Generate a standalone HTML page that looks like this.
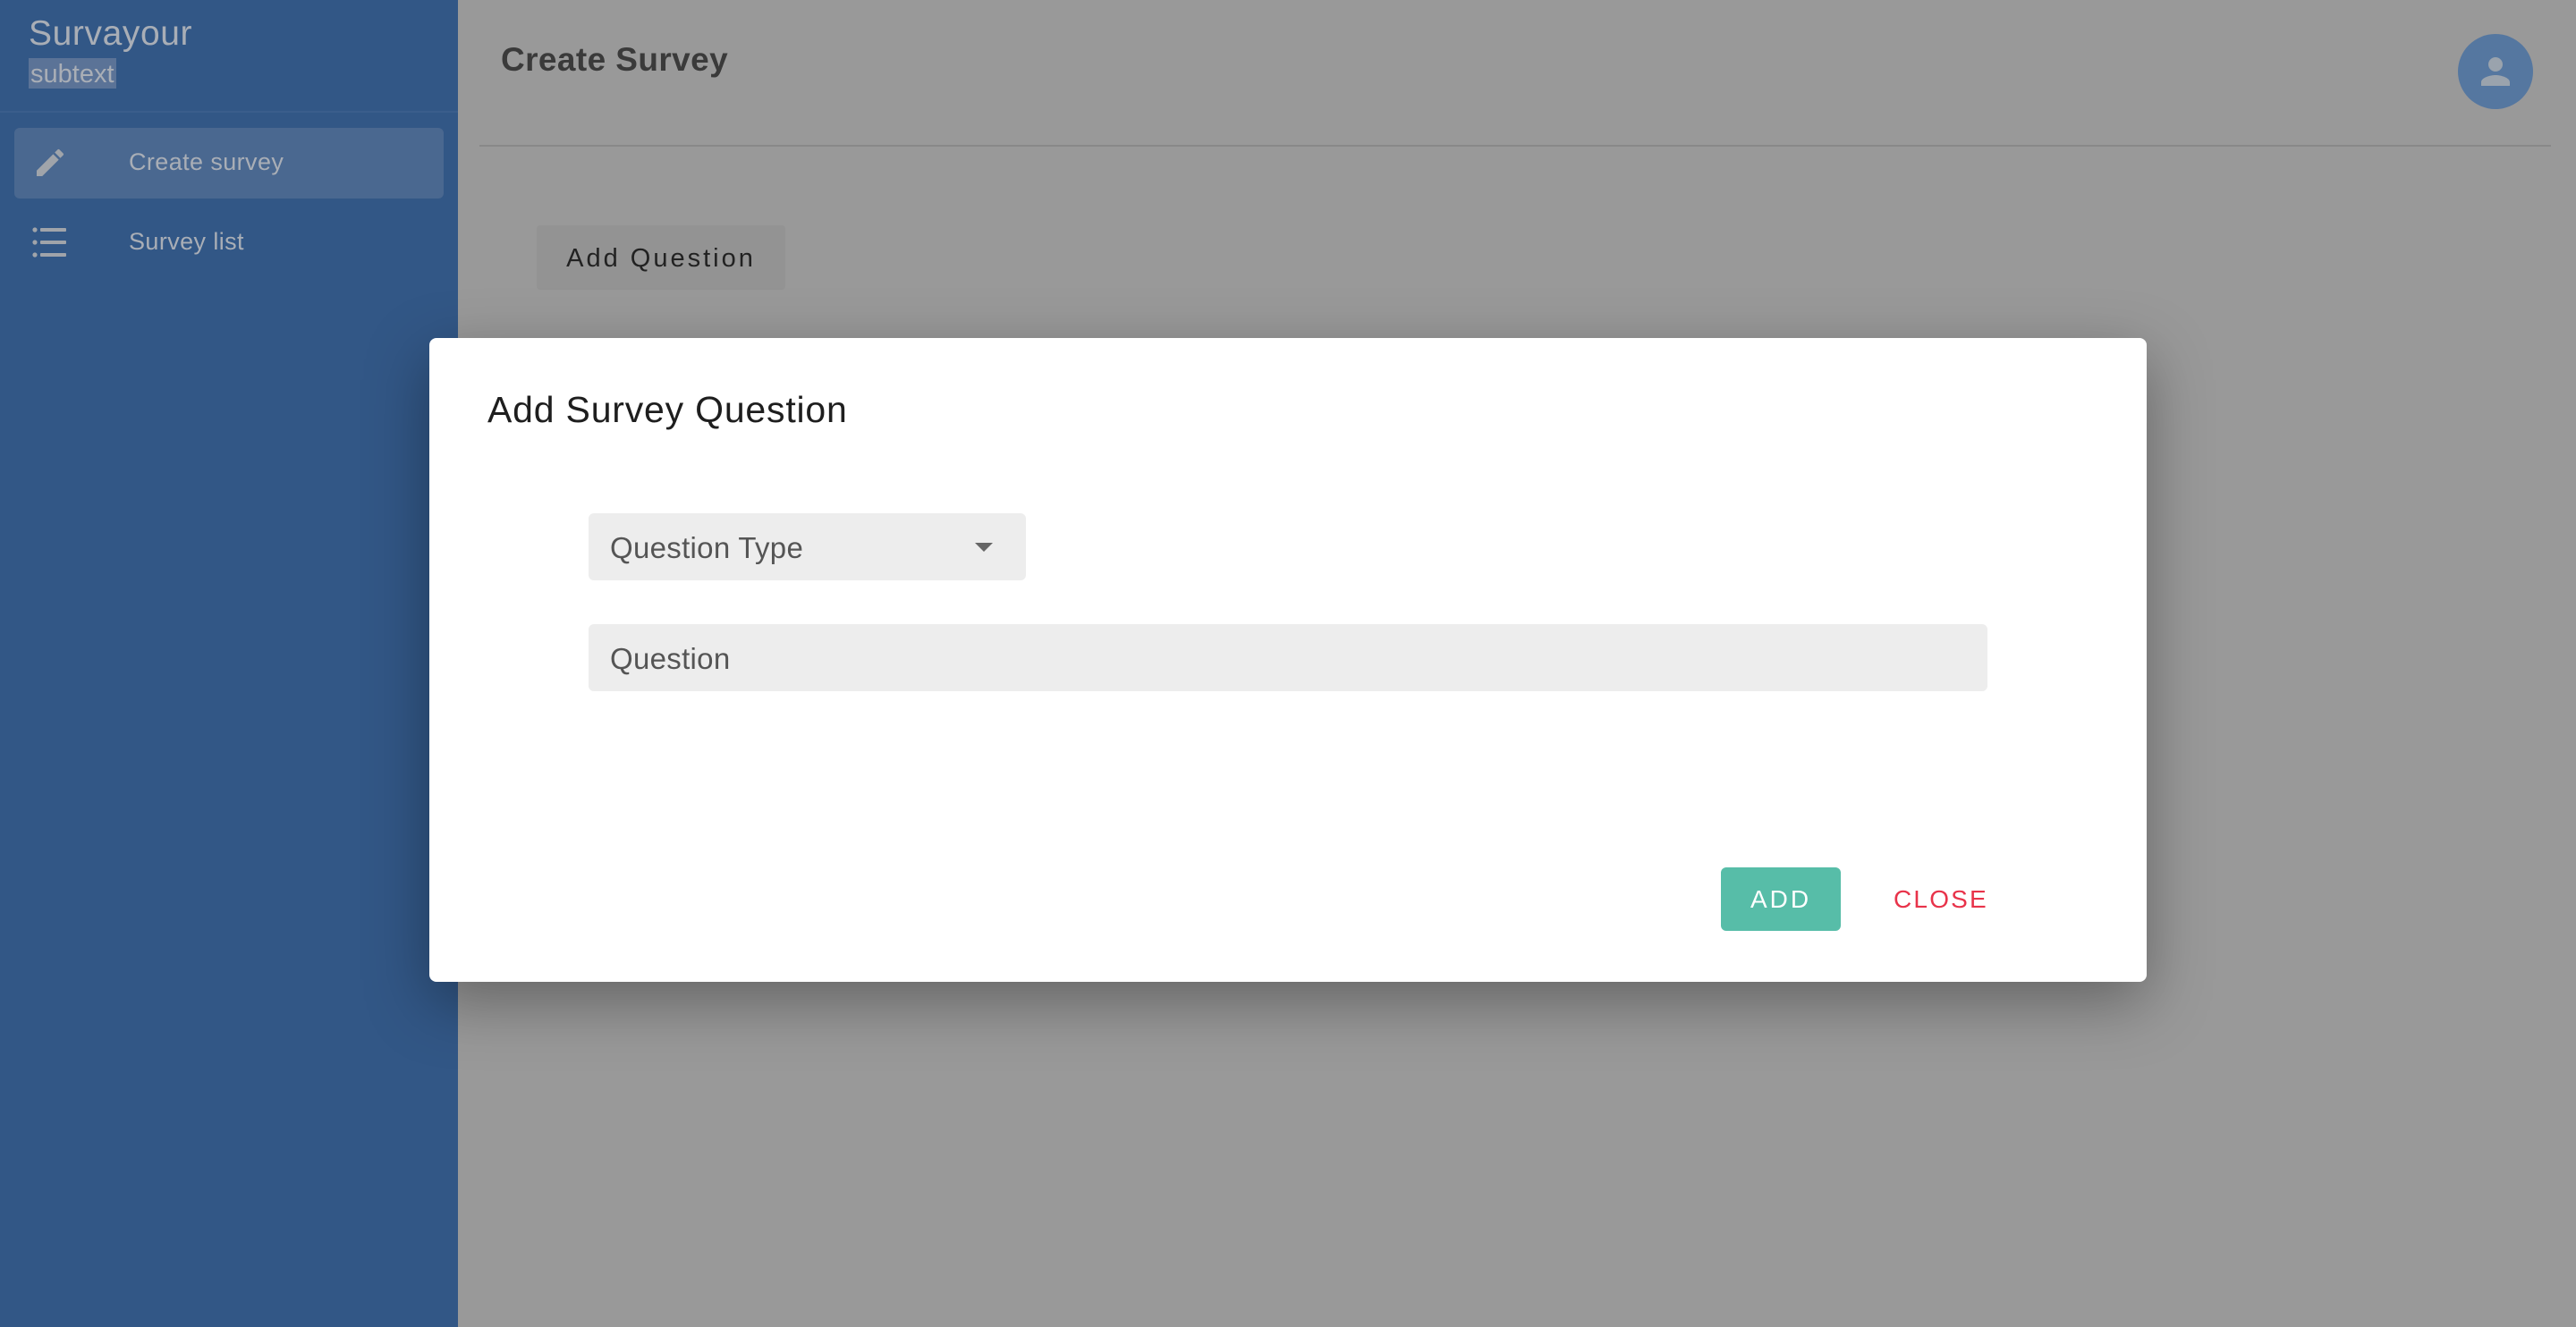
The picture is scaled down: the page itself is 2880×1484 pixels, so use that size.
<!DOCTYPE html>
<html><head><meta charset="utf-8"><style>
*{margin:0;padding:0;box-sizing:border-box}
body{width:2880px;height:1484px;overflow:hidden;background:#999;font-family:"Liberation Sans",sans-serif;position:relative}
.side{position:absolute;left:0;top:0;width:512px;height:1484px;background:#325786}
.abs{position:absolute}
</style></head><body>
<div class="side">
  <div class="abs" style="left:32px;top:16px;font-size:39px;letter-spacing:0.6px;color:#a9aeb6;">Survayour</div>
  <div class="abs" style="left:32px;top:65px;height:34px;padding:0 2px;background:#5b7397;font-size:29px;line-height:36px;color:#a9aeb6;">subtext</div>
  <div class="abs" style="left:0;top:124px;width:512px;height:2px;background:#3a5e8c"></div>
  <div class="abs" style="left:16px;top:143px;width:480px;height:79px;border-radius:6px;background:#4a6890"></div>
  <svg class="abs" style="left:36px;top:162px" width="40" height="40" viewBox="0 0 24 24"><path fill="#a0a4aa" d="M3 17.25V21h3.75L17.81 9.94l-3.75-3.75L3 17.25zM20.71 7.04a1 1 0 0 0 0-1.41l-2.34-2.34a1 1 0 0 0-1.41 0l-1.83 1.83 3.75 3.75 1.83-1.83z"/></svg>
  <div class="abs" style="left:144px;top:166px;font-size:27px;letter-spacing:0.4px;color:#a9aeb6;">Create survey</div>
  <svg class="abs" style="left:36px;top:254px" width="40" height="34" viewBox="0 0 40 34"><g fill="#a0a4aa"><circle cx="3" cy="3" r="2.6"/><circle cx="3" cy="17" r="2.6"/><circle cx="3" cy="31" r="2.6"/><rect x="9" y="1" width="29" height="4" rx="1"/><rect x="9" y="15" width="29" height="4" rx="1"/><rect x="9" y="29" width="29" height="4" rx="1"/></g></svg>
  <div class="abs" style="left:144px;top:255px;font-size:27px;letter-spacing:0.4px;color:#a9aeb6;">Survey list</div>
</div>
<div class="abs" style="left:560px;top:46px;font-size:37px;letter-spacing:0.4px;font-weight:bold;color:#3a3a3a;">Create Survey</div>
<div class="abs" style="left:536px;top:162px;width:2316px;height:2px;background:#888"></div>
<div class="abs" style="left:600px;top:252px;width:278px;height:72px;border-radius:4px;background:#939393;font-size:29px;letter-spacing:3px;color:#222;text-align:center;line-height:74px;">Add Question</div>
<div class="abs" style="left:2748px;top:38px;width:84px;height:84px;border-radius:50%;background:#5577a0"></div>
<svg class="abs" style="left:2766px;top:56px" width="48" height="48" viewBox="0 0 24 24"><path fill="#9aa3ad" d="M12 12c2.2 0 4-1.8 4-4s-1.8-4-4-4-4 1.8-4 4 1.8 4 4 4zm0 2c-2.7 0-8 1.3-8 4v2h16v-2c0-2.7-5.3-4-8-4z"/></svg>

<div class="abs" style="left:480px;top:378px;width:1920px;height:720px;background:#fff;border-radius:8px;box-shadow:0 22px 70px rgba(0,0,0,.35)">
  <div class="abs" style="left:65px;top:57px;font-size:41px;letter-spacing:0.8px;color:#1e1e1e;">Add Survey Question</div>
  <div class="abs" style="left:178px;top:196px;width:489px;height:75px;border-radius:6px;background:#ededed"></div>
  <div class="abs" style="left:202px;top:216px;font-size:33px;letter-spacing:0.3px;color:#555;">Question Type</div>
  <div class="abs" style="left:610px;top:229px;width:0;height:0;border-left:10px solid transparent;border-right:10px solid transparent;border-top:10px solid #666"></div>
  <div class="abs" style="left:178px;top:320px;width:1564px;height:75px;border-radius:6px;background:#ededed"></div>
  <div class="abs" style="left:202px;top:340px;font-size:33px;letter-spacing:0.3px;color:#555;">Question</div>
  <div class="abs" style="left:1444px;top:592px;width:134px;height:71px;border-radius:6px;background:#57bda8;color:#fff;font-size:28px;letter-spacing:3px;text-align:center;line-height:72px;">ADD</div>
  <div class="abs" style="left:1637px;top:592px;height:71px;line-height:72px;color:#e8334a;font-size:28px;letter-spacing:2.2px;">CLOSE</div>
</div>
</body></html>
